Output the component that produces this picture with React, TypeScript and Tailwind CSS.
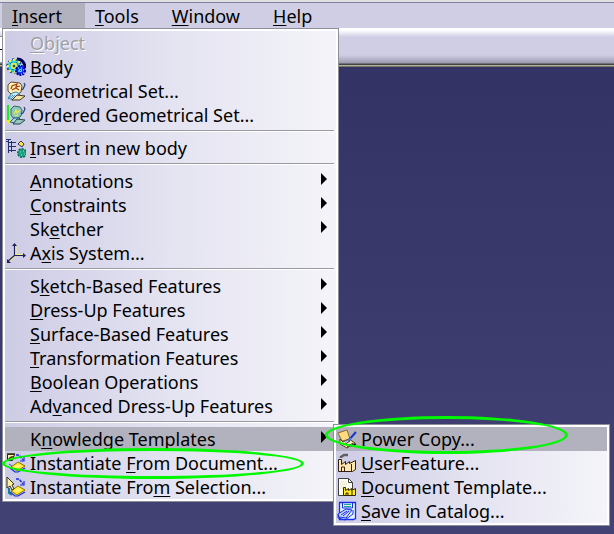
import React from 'react';
import clsx from 'clsx';

type Entry = {
    label: string;
    hotkey?: number;
    icon?: React.ReactNode;
    submenu?: boolean;
    active?: boolean;
    disabled?: boolean;
};

const Icon: React.FC<{ children: React.ReactNode }> = ({ children }) => (
    <svg viewBox="0 0 20 20" className="h-5 w-5" fill="none" strokeWidth="1" aria-hidden="true">
        {children}
    </svg>
);

const BodyIcon = () => (
    <Icon>
        <path d="M11 2c5 0 8 4 8 9" stroke="#000058" strokeWidth="3" />
        <circle cx="8" cy="9" r="6.5" fill="#30d0e8" stroke="#205878" strokeWidth="2.4" strokeDasharray="2 2" />
        <circle cx="8" cy="9" r="6" fill="#34d0e4" />
        <path d="M7 2h2v2H7zM12 4h2v2h-2zM1 8h2v2H1zM3 3h2v2H3zM3 13h2v2H3zM8 14h2v2H8z" fill="#e8f050" />
        <path d="M4 7l2-2M10 5l2 3M5 12l3 1" stroke="#207890" />
        <path d="M6 7h4v4H6z" fill="#106070" stroke="#f4f43c" strokeWidth="1.5" />
        <circle cx="14.5" cy="13.5" r="4.5" fill="#1030e0" stroke="#0000b0" strokeWidth="2" strokeDasharray="2 1" />
        <path d="M12 11h1M15 11h1M17 13h1M12 14h1M15 17h1M17 16h1" stroke="#40d8ff" strokeWidth="1.5" />
        <path d="M13.5 12.5h2v2h-2z" stroke="#60e0ff" />
    </Icon>
);

const GeometricalSetIcon = () => (
    <Icon>
        <path d="M2 4l3-3 9 1 2 3-1 6-3 2-7 0-3-3z" fill="#fff0b0" stroke="#5c4a38" />
        <path d="M5 8l1-3 5-2-1 3 4-1M6 9l4-2 3 2" stroke="#a83818" strokeWidth="1.2" />
        <path d="M2 17l4-5 4-1 4 2-4 2-3 4z" fill="#c8ecfc" stroke="#3880a8" />
        <path d="M7 14l-5 4M9 14l-4 4" stroke="#3890c0" />
        <path d="M6 19l5-5 8 1-5 4z" fill="#f4e4a8" stroke="#40341c" />
        <path d="M18 2l1 2-2 4-2 1" stroke="#284078" strokeWidth="1.2" />
    </Icon>
);

const OrderedSetIcon = () => (
    <Icon>
        <path d="M5 4l3-3 6 1 2 3-1 6-3 2-5 0-2-3z" fill="#8cc8bc" stroke="#386860" />
        <path d="M8 9l2-4 1 3 3-3M9 11l3-1" stroke="#e8ec50" strokeWidth="1.2" />
        <path d="M4 17l4-4 6 0-5 5z" fill="#a8d8d8" stroke="#286080" />
        <path d="M7 19l4-5 8 1-5 4z" fill="#98c8c0" stroke="#204850" />
        <path d="M18 2l1 2-2 4-2 1" stroke="#284078" strokeWidth="1.2" />
        <path d="M2 0v17" stroke="#18f018" strokeWidth="2" />
        <path d="M0 15h5l-2.5 4z" fill="#e8f020" />
    </Icon>
);

const NewBodyIcon = () => (
    <Icon>
        <path d="M0 1.5h5M0 3.5h3M2.5 2v13M5.5 3v11M3 4.5h7M3 8.500h7M3 12.5h7" stroke="#203070" />
        <path d="M15 3l3 3-2 3-4-3z" fill="#ffe830" stroke="#283070" />
        <circle cx="16" cy="15" r="4" fill="#20a888" stroke="#0c6858" strokeWidth="2" strokeDasharray="2 1" />
        <circle cx="16" cy="15" r="3.5" fill="#18a080" />
        <path d="M14 14h1M17 13h1M15 17h1M18 16h1" stroke="#90e8c8" />
    </Icon>
);

const AxisIcon = () => (
    <Icon>
        <path d="M9.5 2v10H18M9 13l-7 6" stroke="#f4f080" strokeWidth="2" />
        <path d="M8.500 2v10.500H19M8.500 12.500l-7 6" stroke="#202060" strokeWidth="1.2" />
        <path d="M6 3l2.5-3L11 3zM17 10l3 2.5-3 2.5zM1 16v4h4z" fill="#202060" />
    </Icon>
);

// shared by both "Instantiate" icons
const Sheets = () => (
    <>
        <path d="M4 15l5 4 3 0 7-4" stroke="#1828e0" strokeWidth="1.2" />
        <path d="M5 14l7-5 7 4-8 5z" fill="#ffe828" stroke="#8c7400" />
        <path d="M8 14l4-3 4 2-4 2z" fill="#fff670" />
        <path d="M10 2h3l4 5" stroke="#1828e0" strokeWidth="1.5" strokeDasharray="3 1" />
        <path d="M18 4v4h-4" stroke="#1828e0" strokeWidth="1.2" />
    </>
);

const FromDocumentIcon = () => (
    <Icon>
        <path d="M1.500 1.500h7l-2 6h-5z" fill="#fff0a0" stroke="#202020" />
        <path d="M1 1h8M5 4h3M2 7l3-3" stroke="#303010" strokeWidth="1.5" />
        <path d="M3 11l3 2M2 13l3 3" stroke="#1870a0" />
        <Sheets />
    </Icon>
);

const FromSelectionIcon = () => (
    <Icon>
        <Sheets />
        <path d="M3 11v5l3 2" stroke="#108090" strokeWidth="2" />
        <path d="M1 0l7 7-2 1 2 4-2 1-2-4-3 2z" fill="#fff0a0" stroke="#303020" />
    </Icon>
);

const PowerCopyIcon = () => (
    <Icon>
        <path d="M1 4l9-3 3 9-8 2z" fill="#ffdc80" stroke="#906830" />
        <path d="M3 10l3 3 6-3 6 4-8 5-7-4z" fill="#fff0c0" stroke="#504020" />
        <path d="M7 16l6-4M10 18l6-4" stroke="#303030" />
        <path d="M19 3l-8 9" stroke="#1838c8" strokeWidth="2" />
        <path d="M14 9l-6 5" stroke="#60a8e8" />
        <path d="M12 16l3 1 4-2" stroke="#202020" strokeWidth="1.5" />
    </Icon>
);

const FeatureIcon = () => (
    <Icon>
        <path d="M4 5V4l3-2h4" stroke="#606060" strokeWidth="2.5" />
        <path d="M1.500 18.500V6.500h3v5l4-3v3l4-3v2l6-3v9l-3 2z" fill="#ffe6b0" stroke="#302010" />
        <path d="M4.500 18v-4h3v4M14.500 11v7" stroke="#302010" />
    </Icon>
);

const DocumentIcon = () => (
    <Icon>
        <path d="M1.500 1.500h10l4 4v13h-14z" fill="#fffff4" stroke="#404040" />
        <path d="M11.500 1.500v4h4" stroke="#404040" />
        <path d="M4 5h6M3 7h8M4 9h5M3 11h3" stroke="#d8d8a0" strokeDasharray="1 1" />
        <path d="M6.500 18.500v-8h2v3l3-2v2l3-2v2l4-2v7z" fill="#ffe820" stroke="#302800" />
        <path d="M9 18v-2h2v2M15 14v4" stroke="#302800" />
    </Icon>
);

const CatalogIcon = () => (
    <Icon>
        <path d="M2.500 1.500h16v16l-2 1h-14z" fill="#e4f4ff" stroke="#1830e8" strokeWidth="1.3" />
        <path d="M5.500 2v5h10V2" stroke="#1830e8" />
        <path d="M7 3.500h7M7 5.500h7" stroke="#18a090" />
        <path d="M1 13l8-5 6 1-6 8-7-1z" fill="#c8d4f8" stroke="#1830e8" />
        <path d="M1 13v4l7 2 8-6V9M4 14l6-4M6 15l6-5" stroke="#1830e8" />
    </Icon>
);

const insertMenu: Entry[][] = [
    [
        { label: 'Object', hotkey: 0, disabled: true },
        { label: 'Body', hotkey: 0, icon: <BodyIcon /> },
        { label: 'Geometrical Set...', hotkey: 0, icon: <GeometricalSetIcon /> },
        { label: 'Ordered Geometrical Set...', hotkey: 1, icon: <OrderedSetIcon /> },
    ],
    [{ label: 'Insert in new body', hotkey: 0, icon: <NewBodyIcon /> }],
    [
        { label: 'Annotations', hotkey: 0, submenu: true },
        { label: 'Constraints', hotkey: 0, submenu: true },
        { label: 'Sketcher', hotkey: 2, submenu: true },
        { label: 'Axis System...', hotkey: 1, icon: <AxisIcon /> },
    ],
    [
        { label: 'Sketch-Based Features', hotkey: 1, submenu: true },
        { label: 'Dress-Up Features', hotkey: 0, submenu: true },
        { label: 'Surface-Based Features', hotkey: 0, submenu: true },
        { label: 'Transformation Features', hotkey: 0, submenu: true },
        { label: 'Boolean Operations', hotkey: 0, submenu: true },
        { label: 'Advanced Dress-Up Features', hotkey: 2, submenu: true },
    ],
    [
        { label: 'Knowledge Templates', hotkey: 1, submenu: true, active: true },
        { label: 'Instantiate From Document...', hotkey: 12, icon: <FromDocumentIcon /> },
        { label: 'Instantiate From Selection...', hotkey: 15, icon: <FromSelectionIcon /> },
    ],
];

const templatesMenu: Entry[][] = [
    [
        { label: 'Power Copy...', icon: <PowerCopyIcon />, active: true },
        { label: 'UserFeature...', hotkey: 0, icon: <FeatureIcon /> },
        { label: 'Document Template...', hotkey: 0, icon: <DocumentIcon /> },
        { label: 'Save in Catalog...', hotkey: 0, icon: <CatalogIcon /> },
    ],
];

const Label: React.FC<{ text: string; hotkey?: number }> = ({ text, hotkey }) => {
    if (hotkey === undefined) return <span>{text}</span>;
    return (
        <span>
            {text.slice(0, hotkey)}
            <span className="underline decoration-1 underline-offset-2 [text-decoration-skip-ink:none]">
                {text[hotkey]}
            </span>
            {text.slice(hotkey + 1)}
        </span>
    );
};

const Menu: React.FC<{ groups: Entry[][]; name: string }> = ({ groups, name }) => (
    <div role="menu" aria-label={name} className="border border-[#8e8e9a] bg-white p-0.5">
        <div className="bg-linear-to-r from-[#cdcce5] via-[#e4e3f1] to-[#f4f4f9]">
            {groups.map((group, i) => (
                <React.Fragment key={i}>
                    {i > 0 && (
                        <div className="flex h-[9px] flex-col pt-[3px]">
                            <div className="mr-0.5 h-0.5 border-t border-[#9a9aa4] bg-white" />
                        </div>
                    )}
                    {group.map((entry) => (
                        <button
                            key={entry.label}
                            type="button"
                            role="menuitem"
                            disabled={entry.disabled}
                            className={clsx(
                                'flex h-6 w-full items-center whitespace-nowrap text-left',
                                entry.active && 'bg-[#b1b2bd]',
                                entry.disabled && 'text-[#a0a0a4] [text-shadow:1px_1px_0_#ffffff]',
                            )}
                        >
                            <span className="flex w-[25px] shrink-0 pl-px">{entry.icon}</span>
                            <Label text={entry.label} hotkey={entry.hotkey} />
                            {entry.submenu && (
                                <svg viewBox="0 0 6 12" className="mr-[9px] mb-1 ml-auto h-3 w-1.5" aria-hidden="true">
                                    <path d="M0 0l6 6-6 6z" fill="#000" />
                                </svg>
                            )}
                        </button>
                    ))}
                </React.Fragment>
            ))}
        </div>
    </div>
);

const Ring: React.FC<{ className: string }> = ({ className }) => (
    <div className={clsx('pointer-events-none absolute rounded-[50%] border-[3px] border-[#00f800]', className)} />
);

export default function App() {
    return (
        <div className="relative min-h-screen overflow-hidden bg-linear-to-b from-[#333366] from-15% to-[#424274] font-['Noto_Sans',sans-serif] text-[18px] leading-6 text-black">
            <div className="h-[3px] border-b border-[#7f7fa3] bg-[#dfe0e0]" />
            <nav className="flex h-[25px] bg-[#cfcee5] pl-0.5">
                {['Insert', 'Tools', 'Window', 'Help'].map((item, i) => (
                    <button key={item} type="button" className={clsx('pr-[23px] pl-[10px]', i === 0 && 'bg-[#b1b2bd]')}>
                        <Label text={item} hotkey={0} />
                    </button>
                ))}
            </nav>
            <div className="h-[39px] border-b border-[#77775f] bg-[linear-gradient(#ffffff_0,#ffffff_2px,#cfcee5_9px,#cfcee5_27px,#9c9bb0_35px,#444444_36px,#444444_37px,#b0b0a0_37px)] pt-2">
                <div className="flex h-[26px] w-0.5 items-center border-t border-[#8e8e9a] bg-white">
                    <div className="h-px w-full bg-black" />
                </div>
            </div>

            <div className="absolute top-7 left-0.5 w-[337px]">
                <Menu name="Insert" groups={insertMenu} />
                <div className="absolute bottom-[-24px] left-[331px] w-[277px]">
                    <Menu name="Knowledge Templates" groups={templatesMenu} />
                    <Ring className="-top-2 -left-2 h-[38px] w-[243px]" />
                </div>
                <Ring className="bottom-[23px] left-0 h-[31px] w-[302px]" />
            </div>
        </div>
    );
}
